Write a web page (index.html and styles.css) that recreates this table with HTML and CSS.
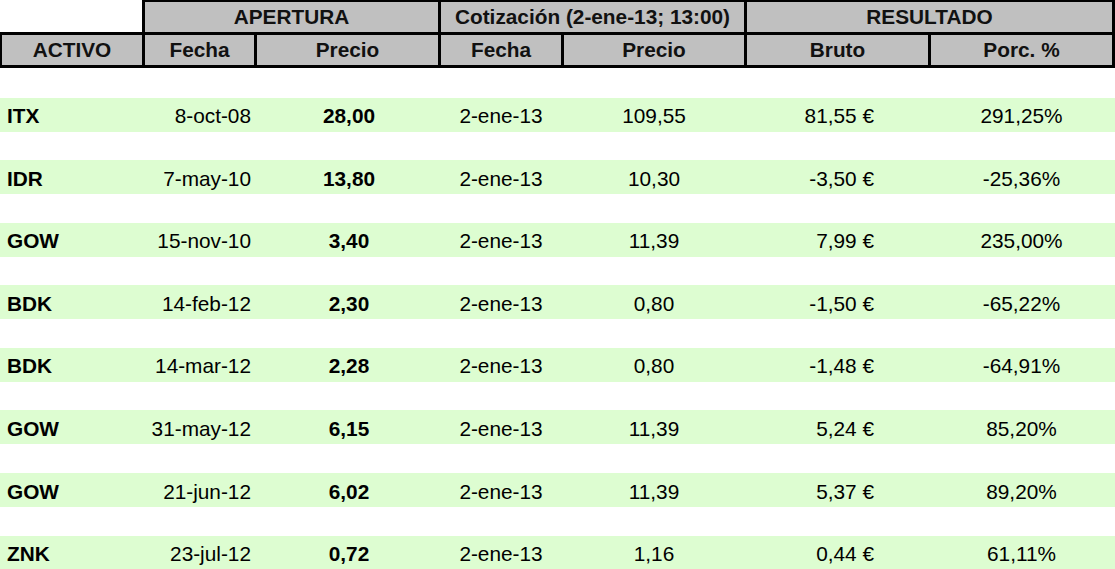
FILE: index.html
```html
<!DOCTYPE html>
<html lang="es">
<head>
<meta charset="utf-8">
<title>Cartera</title>
<link rel="stylesheet" href="styles.css">
</head>
<body>
<div class="sheet">
  <div class="head">
    <div class="head-top">
      <div class="hcell">APERTURA</div>
      <div class="hcell">Cotización (2-ene-13; 13:00)</div>
      <div class="hcell">RESULTADO</div>
    </div>
    <div class="head-sub cols">
      <div class="hcell">ACTIVO</div>
      <div class="hcell">Fecha</div>
      <div class="hcell">Precio</div>
      <div class="hcell">Fecha</div>
      <div class="hcell">Precio</div>
      <div class="hcell">Bruto</div>
      <div class="hcell">Porc. %</div>
    </div>
  </div>
  <div class="rows">
    <div class="row cols"><div class="c-act">ITX</div><div class="c-date">8-oct-08</div><div class="c-price">28,00</div><div class="c-center">2-ene-13</div><div class="c-center">109,55</div><div class="c-bruto">81,55 €</div><div class="c-center">291,25%</div></div>
    <div class="row cols"><div class="c-act">IDR</div><div class="c-date">7-may-10</div><div class="c-price">13,80</div><div class="c-center">2-ene-13</div><div class="c-center">10,30</div><div class="c-bruto">-3,50 €</div><div class="c-center">-25,36%</div></div>
    <div class="row cols"><div class="c-act">GOW</div><div class="c-date">15-nov-10</div><div class="c-price">3,40</div><div class="c-center">2-ene-13</div><div class="c-center">11,39</div><div class="c-bruto">7,99 €</div><div class="c-center">235,00%</div></div>
    <div class="row cols"><div class="c-act">BDK</div><div class="c-date">14-feb-12</div><div class="c-price">2,30</div><div class="c-center">2-ene-13</div><div class="c-center">0,80</div><div class="c-bruto">-1,50 €</div><div class="c-center">-65,22%</div></div>
    <div class="row cols"><div class="c-act">BDK</div><div class="c-date">14-mar-12</div><div class="c-price">2,28</div><div class="c-center">2-ene-13</div><div class="c-center">0,80</div><div class="c-bruto">-1,48 €</div><div class="c-center">-64,91%</div></div>
    <div class="row cols"><div class="c-act">GOW</div><div class="c-date">31-may-12</div><div class="c-price">6,15</div><div class="c-center">2-ene-13</div><div class="c-center">11,39</div><div class="c-bruto">5,24 €</div><div class="c-center">85,20%</div></div>
    <div class="row cols"><div class="c-act">GOW</div><div class="c-date">21-jun-12</div><div class="c-price">6,02</div><div class="c-center">2-ene-13</div><div class="c-center">11,39</div><div class="c-bruto">5,37 €</div><div class="c-center">89,20%</div></div>
    <div class="row cols"><div class="c-act">ZNK</div><div class="c-date">23-jul-12</div><div class="c-price">0,72</div><div class="c-center">2-ene-13</div><div class="c-center">1,16</div><div class="c-bruto">0,44 €</div><div class="c-center">61,11%</div></div>
  </div>
</div>
</body>
</html>
```

FILE: styles.css
```css
html, body {
  margin: 0;
  padding: 0;
  background: #ffffff;
}

body {
  font-family: "Liberation Sans", Arial, sans-serif;
  font-size: 20.8px;
  color: #000;
  width: 1115px;
  height: 569px;
  overflow: hidden;
}

.sheet {
  display: flex;
  flex-direction: column;
}

.head {
  display: flex;
  flex-direction: column;
}

.head-top {
  margin-left: 142px;
  display: grid;
  grid-template-columns: 293px 303px 365px;
  column-gap: 3px;
  background: #000;
  border-top: 2px solid #000;
  border-left: 3px solid #000;
  border-right: 3px solid #000;
}

.hcell {
  background: #c0c0c0;
  height: 30px;
  display: flex;
  align-items: center;
  justify-content: center;
  font-weight: bold;
  color: #111;
  white-space: nowrap;
}

.cols {
  display: grid;
  grid-template-columns: 140px 109px 181px 120px 180px 181px 181px;
  column-gap: 3px;
}

.head-sub {
  background: #000;
  border-top: 3px solid #000;
  border-bottom: 3px solid #000;
  border-left: 2px solid #000;
  border-right: 3px solid #000;
}

.rows {
  display: flex;
  flex-direction: column;
  gap: 28.6px;
  padding-top: 29.5px;
}

.row {
  box-sizing: border-box;
  background: #ddfdd1;
  height: 34px;
  padding: 3px 3px 0 2px;
  align-items: center;
}

.row > div {
  white-space: nowrap;
}

.c-act {
  font-weight: bold;
  padding-left: 5px;
}

.c-date {
  text-align: right;
  padding-right: 3px;
}

.c-price {
  font-weight: bold;
  text-align: center;
  padding-left: 3px;
}

.c-center {
  text-align: center;
}

.c-bruto {
  text-align: right;
  padding-right: 54px;
}
```
